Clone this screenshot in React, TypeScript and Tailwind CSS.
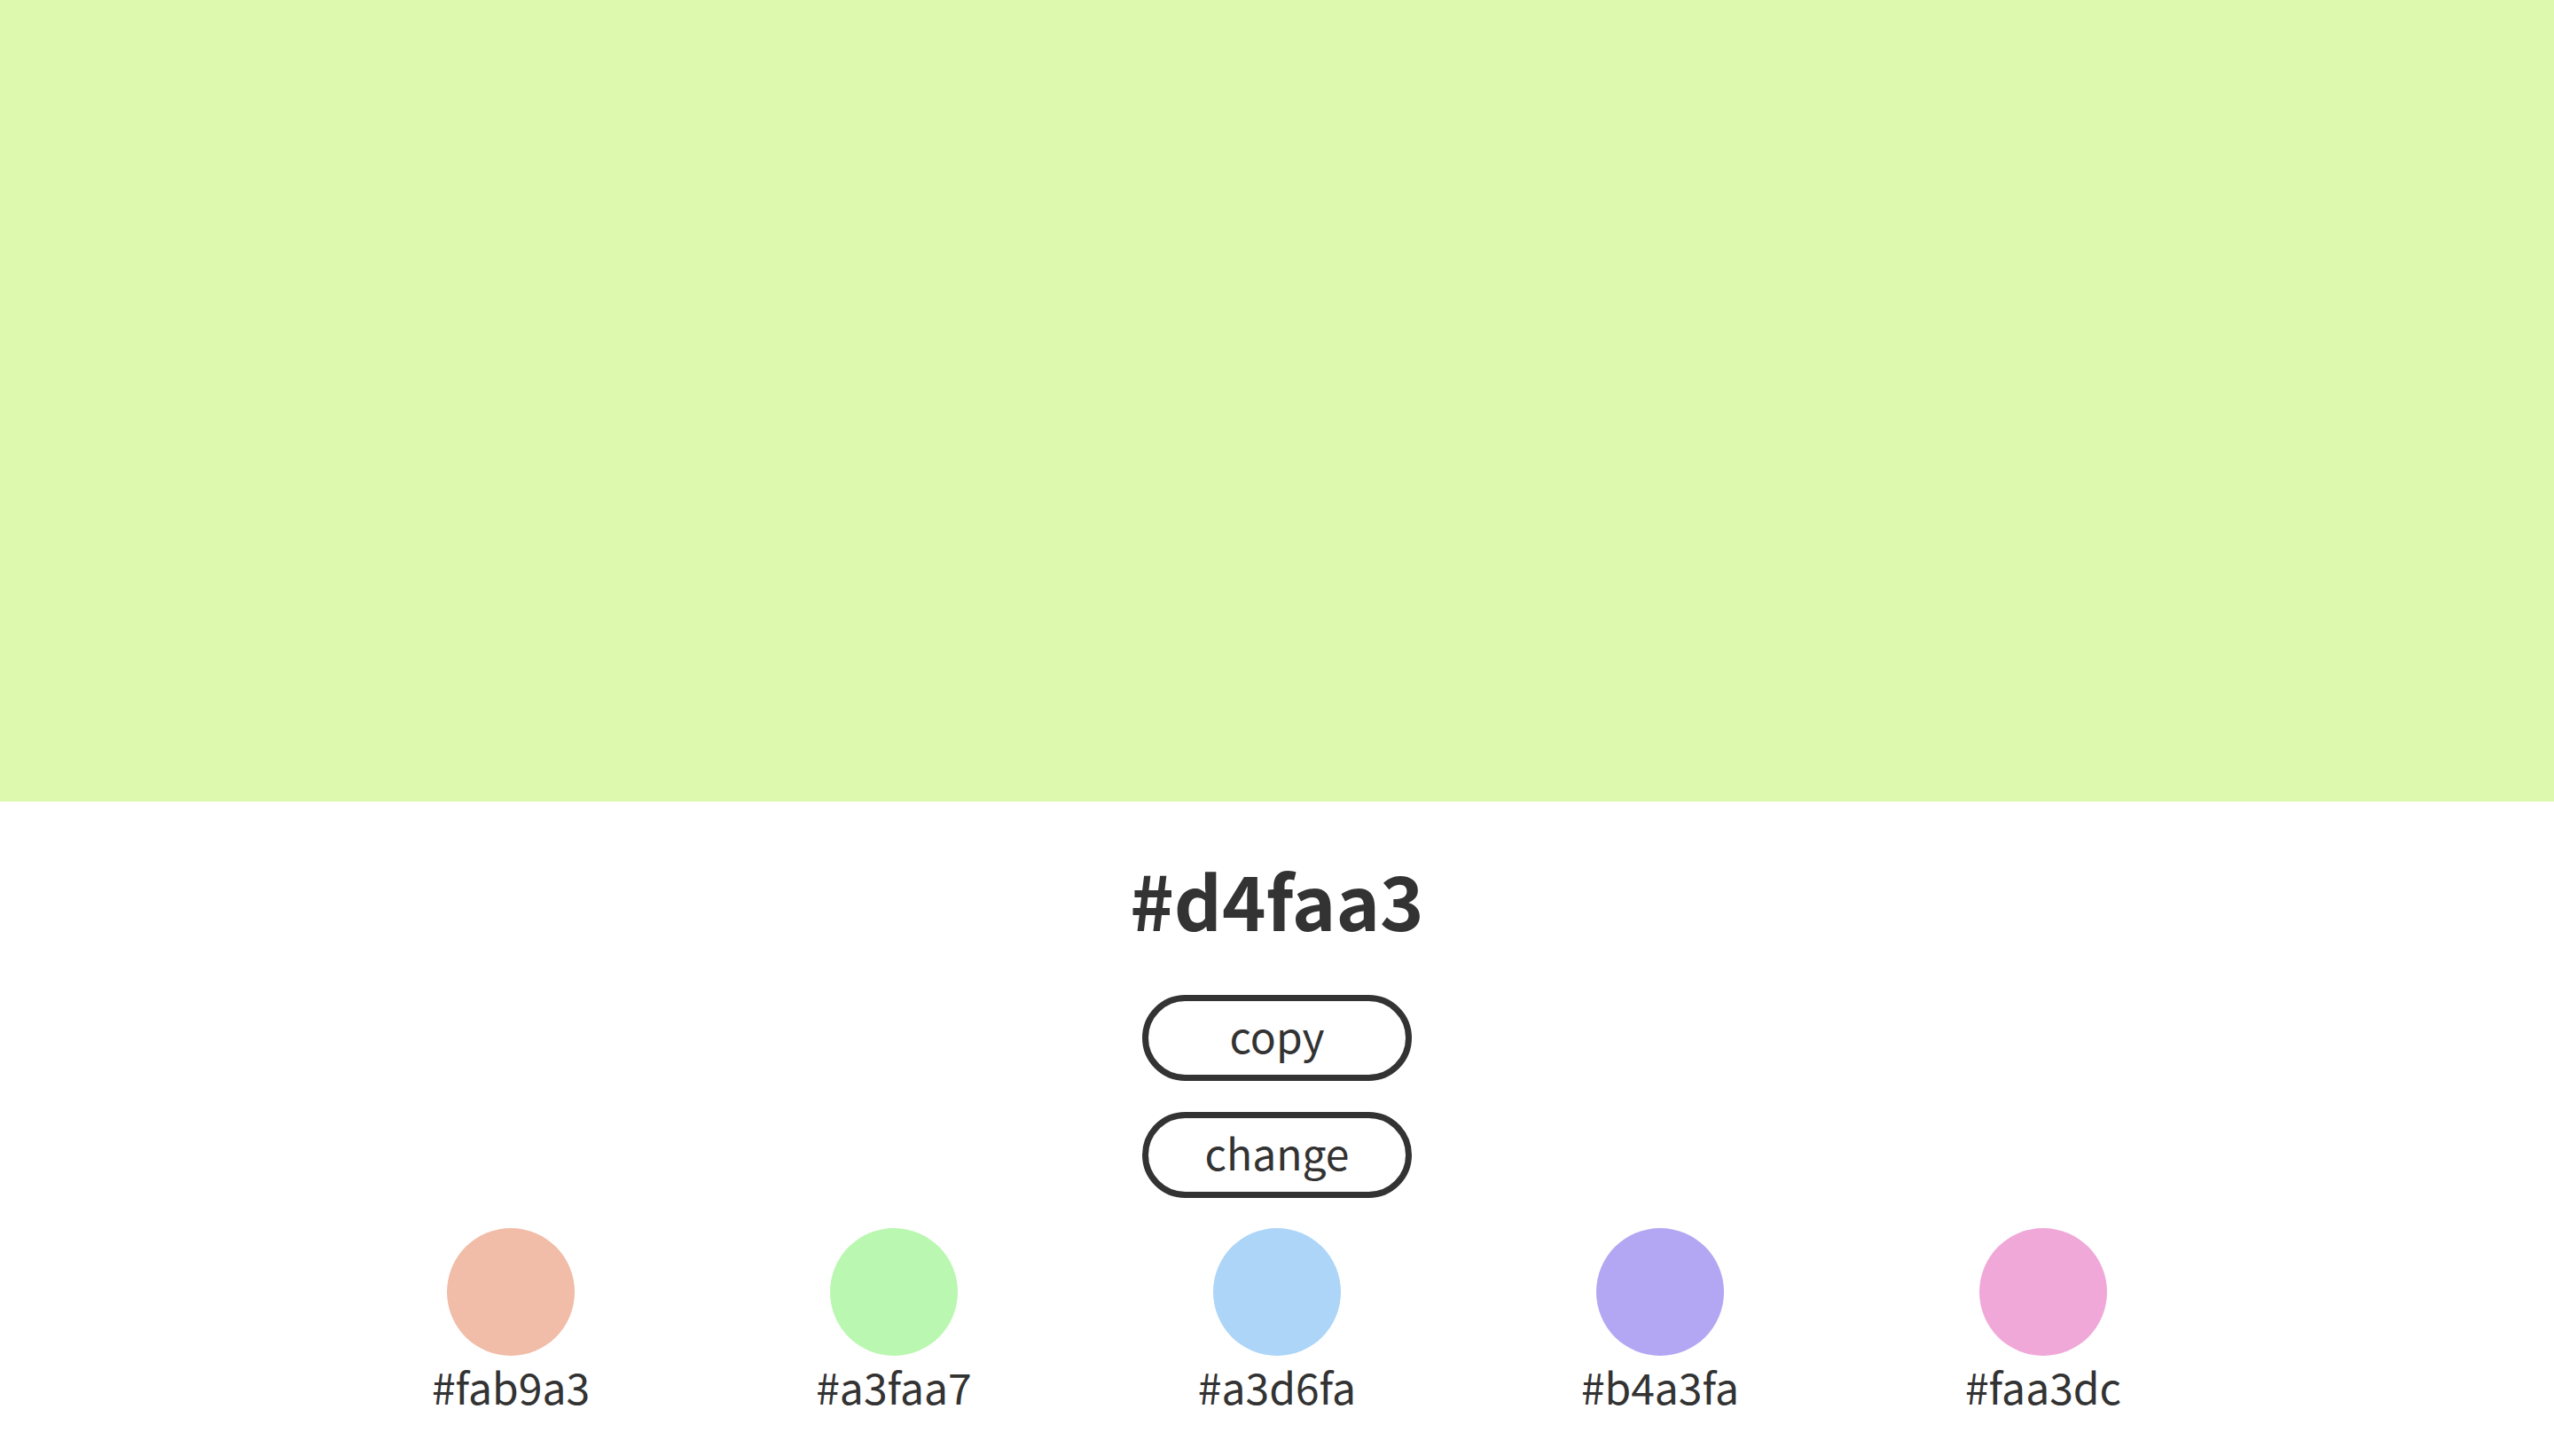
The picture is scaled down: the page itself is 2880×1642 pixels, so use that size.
import { useState } from "react";

const palette = [
  { hex: "#fab9a3", shown: "#f1bca8" },
  { hex: "#a3faa7", shown: "#baf7b0" },
  { hex: "#a3d6fa", shown: "#acd5f8" },
  { hex: "#b4a3fa", shown: "#b3a6f3" },
  { hex: "#faa3dc", shown: "#f0a8d9" },
];

export default function App() {
  const [color] = useState<string>("#d4faa3");

  return (
    <div
      className="min-h-screen bg-white text-[#333333]"
      style={{ fontFamily: '"Noto Sans CJK JP", "Noto Sans", sans-serif' }}
    >
      <div className="h-[904px] w-full bg-[#ddf9ad]" />

      <div className="flex flex-col items-center">
        <h1 className="mt-[68px] text-[84px] font-bold leading-none">{color}</h1>

        <button className="mt-[66px] flex h-[97px] w-[304px] items-center justify-center rounded-full border-[7px] border-[#333333] pb-[8px] text-[48px] leading-none">
          copy
        </button>
        <button className="mt-[35px] flex h-[97px] w-[304px] items-center justify-center rounded-full border-[7px] border-[#333333] pb-[8px] text-[48px] leading-none">
          change
        </button>

        <div className="mt-[34px] grid w-[2160px] grid-cols-5">
          {palette.map((c) => (
            <div key={c.hex} className="flex flex-col items-center">
              <div
                className="h-[144px] w-[144px] rounded-full"
                style={{ backgroundColor: c.shown }}
              />
              <span className="mt-[10px] text-[48px] leading-none">{c.hex}</span>
            </div>
          ))}
        </div>
      </div>
    </div>
  );
}
